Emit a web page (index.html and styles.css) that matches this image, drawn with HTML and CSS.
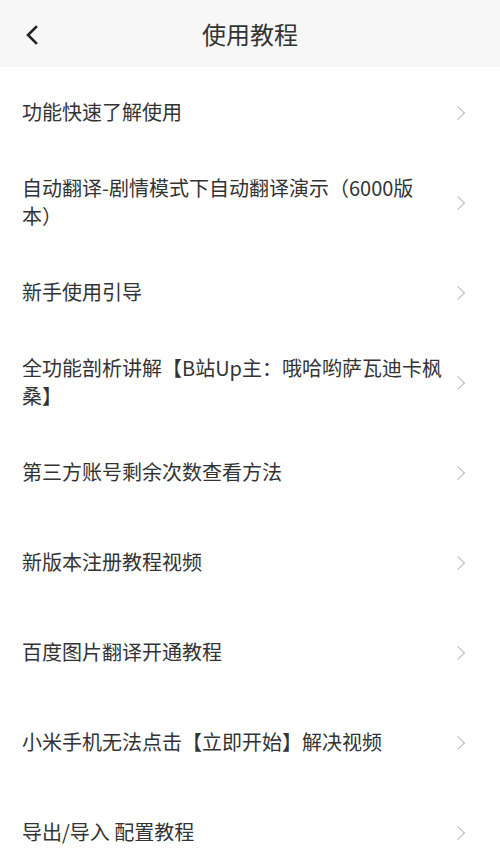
FILE: index.html
```html
<!DOCTYPE html>
<html>
<head>
  <title>使用教程</title>
  <meta charset="utf-8">
  <link rel="stylesheet" href="styles.css">
</head>

<body>
  <div class="navbar">
    <div class="nav-back">
      <svg width="16" height="20" viewBox="0 0 16 20">
        <path d="M12 2 L4 10 L12 18" fill="none" stroke="#222" stroke-width="2.6" stroke-linecap="square"/>
      </svg>
    </div>
    <div class="nav-title">使用教程</div>
  </div>

  <div class="tutorial-list">
    <div class="tutorial-item">
      <div class="item-text">功能快速了解使用</div>
      <span class="item-arrow"></span>
    </div>
    <div class="tutorial-item">
      <div class="item-text">自动翻译-剧情模式下自动翻译演示（6000版本）</div>
      <span class="item-arrow"></span>
    </div>
    <div class="tutorial-item">
      <div class="item-text">新手使用引导</div>
      <span class="item-arrow"></span>
    </div>
    <div class="tutorial-item">
      <div class="item-text">全功能剖析讲解【B站Up主：哦哈哟萨瓦迪卡枫桑】</div>
      <span class="item-arrow"></span>
    </div>
    <div class="tutorial-item">
      <div class="item-text">第三方账号剩余次数查看方法</div>
      <span class="item-arrow"></span>
    </div>
    <div class="tutorial-item">
      <div class="item-text">新版本注册教程视频</div>
      <span class="item-arrow"></span>
    </div>
    <div class="tutorial-item">
      <div class="item-text">百度图片翻译开通教程</div>
      <span class="item-arrow"></span>
    </div>
    <div class="tutorial-item">
      <div class="item-text">小米手机无法点击【立即开始】解决视频</div>
      <span class="item-arrow"></span>
    </div>
    <div class="tutorial-item">
      <div class="item-text">导出/导入 配置教程</div>
      <span class="item-arrow"></span>
    </div>
  </div>
</body>
</html>
```

FILE: styles.css
```css
body {
  font-family: 'Noto Sans CJK SC', sans-serif;
  background-color: #fff;
  margin: 0;
  padding: 0;
  color: #333;
}

/* Top bar */
.navbar {
  position: relative;
  height: 67px;
  background-color: #f7f7f7;
  display: flex;
  align-items: center;
  justify-content: center;
}

.nav-back {
  position: absolute;
  left: 24px;
  top: 25px;
  width: 16px;
  height: 20px;
}

.nav-title {
  font-size: 24px;
  color: #333;
}

/* List */
.tutorial-item {
  height: 90px;
  display: flex;
  align-items: center;
  padding: 0 37px 0 22px;
}

.item-text {
  flex: 1;
  font-size: 20px;
  line-height: 28px;
  padding-right: 7px;
  text-spacing-trim: space-all;
}

.item-arrow {
  width: 9px;
  height: 9px;
  border-top: 1.5px solid #b8b8b8;
  border-right: 1.5px solid #b8b8b8;
  transform: rotate(45deg);
  margin-top: 2px;
}
```
